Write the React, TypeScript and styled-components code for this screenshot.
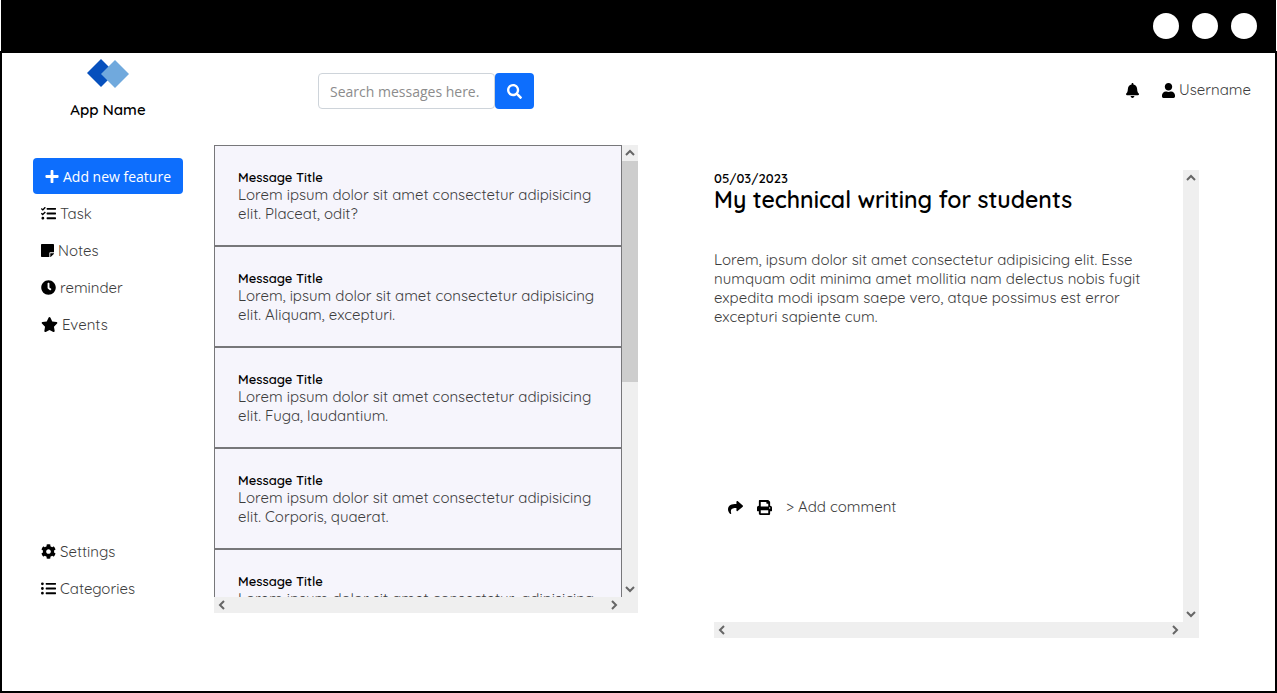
import React from "react";
import styled, { createGlobalStyle } from "styled-components";
import {
  FaBell,
  FaClock,
  FaCog,
  FaListUl,
  FaPlus,
  FaPrint,
  FaSearch,
  FaShare,
  FaStar,
  FaStickyNote,
  FaTasks,
  FaUser,
} from "react-icons/fa";

const brandFont = 'Quicksand, Lato, "Open Sans", sans-serif';
const controlFont = '"Open Sans", "Noto Sans", sans-serif';

const GlobalStyle = createGlobalStyle`
  *, *::before, *::after { box-sizing: border-box; }
  body {
    margin: 0;
    background: #fff;
    color: #000;
    font-family: ${brandFont};
    font-size: 16px;
  }
  h1, h2, p, ul { margin: 0; padding: 0; }
  ul { list-style: none; }
`;

const Shell = styled.div`
  display: flex;
  flex-direction: column;
  min-height: 100vh;
`;

const TitleBar = styled.div`
  display: flex;
  justify-content: flex-end;
  align-items: center;
  gap: 13px;
  height: 51px;
  margin: 0 1px;
  padding-right: 19px;
  background: #000;
`;

const WindowDot = styled.button`
  width: 26px;
  height: 26px;
  padding: 0;
  border: 0;
  border-radius: 50%;
  background: #fff;
`;

const Frame = styled.div`
  flex: 1;
  display: flex;
  flex-direction: column;
  border: 2px solid #000;
`;

const Header = styled.header`
  display: flex;
  height: 92px;
  padding-right: 24px;
`;

const Brand = styled.div`
  display: flex;
  flex-direction: column;
  align-items: center;
  gap: 12px;
  width: 212px;
  padding-top: 6px;
`;

const BrandName = styled.span`
  font-size: 15px;
  line-height: 20px;
  font-weight: 600;
`;

const SearchForm = styled.form`
  display: flex;
  height: 36px;
  margin: 20px auto 0 104px;
`;

const SearchInput = styled.input`
  width: 177px;
  padding: 0 11px;
  border: 1px solid #ced4da;
  border-radius: 4px;
  background: #fff;
  font-family: ${controlFont};
  font-size: 14px;
  &::placeholder { color: #8c8c8c; opacity: 1; }
`;

const SearchButton = styled.button`
  display: flex;
  align-items: center;
  justify-content: center;
  width: 39px;
  padding: 0;
  border: 0;
  border-radius: 4px;
  background: #0d6efd;
  color: #fff;
  font-size: 15px;
`;

const Account = styled.div`
  display: flex;
  align-items: center;
  gap: 23px;
  height: 24px;
  margin-top: 25px;
`;

const IconBox = styled.span<{ $width?: number }>`
  display: flex;
  width: ${(p) => p.$width ?? 15}px;
  svg { width: 100%; height: 15px; }
`;

const BareButton = styled.button`
  display: flex;
  align-items: center;
  gap: 4px;
  padding: 0;
  border: 0;
  background: none;
  color: #000;
  font-family: ${brandFont};
`;

const Label = styled.span`
  color: #3c3c3c;
  font-size: 15px;
  line-height: 20px;
  font-weight: 400;
`;

const Body = styled.div`
  display: flex;
`;

const Sidebar = styled.nav`
  display: flex;
  flex-direction: column;
  width: 212px;
  padding: 13px 31px 31px;
`;

const AddButton = styled.button`
  display: flex;
  align-items: center;
  justify-content: center;
  gap: 4px;
  height: 36px;
  margin-bottom: 1px;
  padding: 0;
  border: 0;
  border-radius: 4px;
  background: #0d6efd;
  color: #fff;
  font-family: ${controlFont};
  font-size: 14px;
  white-space: nowrap;
`;

const NavList = styled.ul<{ $bottom?: boolean }>`
  padding-left: 8px;
  margin-top: ${(p) => (p.$bottom ? "auto" : "0")};
`;

const NavLink = styled.a`
  display: flex;
  align-items: center;
  gap: 4px;
  height: 37px;
  color: #000;
  text-decoration: none;
`;

const Main = styled.main`
  flex: 1;
  display: grid;
  grid-template-columns: minmax(0, 424fr) minmax(0, 485fr);
  gap: 76px;
  padding-right: 76px;
`;

const Pane = styled.section<{ $lowered?: boolean }>`
  display: grid;
  grid-template-columns: minmax(0, 1fr) 16px;
  grid-template-rows: 452px 16px;
  margin-top: ${(p) => (p.$lowered ? "25px" : "0")};
`;

const PaneContent = styled.div`
  overflow: hidden;
`;

const ScrollTrack = styled.div<{ $horizontal?: boolean }>`
  display: flex;
  flex-direction: ${(p) => (p.$horizontal ? "row" : "column")};
  justify-content: space-between;
  background: #efefef;
`;

const TrackCorner = styled.div`
  background: #efefef;
`;

const ScrollThumb = styled.div`
  height: 221px;
  margin-bottom: auto;
  background: #cdcdcd;
`;

const Message = styled.li`
  height: 101px;
  padding: 23px;
  border: 1px solid #77777a;
  background: #f6f5fc;
`;

const MessageTitle = styled.h2`
  font-size: 13px;
  line-height: 16px;
  font-weight: 600;
`;

const Text = styled.p`
  color: #3c3c3c;
  font-size: 15px;
  line-height: 19px;
  font-weight: 400;
  white-space: nowrap;
`;

const Article = styled.article`
  display: flex;
  flex-direction: column;
  height: 100%;
`;

const ArticleDate = styled.time`
  font-size: 13px;
  line-height: 16px;
  font-weight: 600;
`;

const ArticleTitle = styled.h1`
  margin-bottom: 36px;
  font-size: 23px;
  line-height: 28px;
  font-weight: 600;
`;

const Actions = styled.div`
  display: flex;
  align-items: center;
  gap: 14px;
  margin: auto 0 105px 14px;
`;

const arrowPaths = {
  up: "M4 10 8 6 12 10",
  down: "M4 6 8 10 12 6",
  left: "M10 4 6 8 10 12",
  right: "M6 4 10 8 6 12",
};

function Arrow({ dir }: { dir: keyof typeof arrowPaths }) {
  return (
    <svg width="16" height="16" viewBox="0 0 16 16" aria-hidden="true">
      <path d={arrowPaths[dir]} fill="none" stroke="#666" strokeWidth="2" />
    </svg>
  );
}

function Lines({ lines }: { lines: string[] }) {
  return (
    <Text>
      {lines.map((line, i) => (
        <React.Fragment key={line}>
          {i > 0 && <br />}
          {line}
        </React.Fragment>
      ))}
    </Text>
  );
}

function ScrollPane({
  children,
  thumb,
  lowered,
}: {
  children: React.ReactNode;
  thumb?: boolean;
  lowered?: boolean;
}) {
  return (
    <Pane $lowered={lowered}>
      <PaneContent>{children}</PaneContent>
      <ScrollTrack>
        <Arrow dir="up" />
        {thumb && <ScrollThumb />}
        <Arrow dir="down" />
      </ScrollTrack>
      <ScrollTrack $horizontal>
        <Arrow dir="left" />
        <Arrow dir="right" />
      </ScrollTrack>
      <TrackCorner />
    </Pane>
  );
}

const messages = [
  ["Lorem ipsum dolor sit amet consectetur adipisicing", "elit. Placeat, odit?"],
  ["Lorem, ipsum dolor sit amet consectetur adipisicing", "elit. Aliquam, excepturi."],
  ["Lorem ipsum dolor sit amet consectetur adipisicing", "elit. Fuga, laudantium."],
  ["Lorem ipsum dolor sit amet consectetur adipisicing", "elit. Corporis, quaerat."],
  ["Lorem ipsum dolor sit amet consectetur, adipisicing"],
];

const article = [
  "Lorem, ipsum dolor sit amet consectetur adipisicing elit. Esse",
  "numquam odit minima amet mollitia nam delectus nobis fugit",
  "expedita modi ipsam saepe vero, atque possimus est error",
  "excepturi sapiente cum.",
];

const topLinks = [
  { label: "Task", Icon: FaTasks, width: 15 },
  { label: "Notes", Icon: FaStickyNote, width: 13 },
  { label: "reminder", Icon: FaClock, width: 15 },
  { label: "Events", Icon: FaStar, width: 17 },
];

const bottomLinks = [
  { label: "Settings", Icon: FaCog, width: 15 },
  { label: "Categories", Icon: FaListUl, width: 15 },
];

function Links({ items, bottom }: { items: typeof topLinks; bottom?: boolean }) {
  return (
    <NavList $bottom={bottom}>
      {items.map(({ label, Icon, width }) => (
        <li key={label}>
          <NavLink href="#">
            <IconBox $width={width}>
              <Icon />
            </IconBox>
            <Label>{label}</Label>
          </NavLink>
        </li>
      ))}
    </NavList>
  );
}

export default function App() {
  return (
    <>
      <GlobalStyle />
      <Shell>
        <TitleBar>
          <WindowDot aria-label="Minimize" />
          <WindowDot aria-label="Maximize" />
          <WindowDot aria-label="Close" />
        </TitleBar>
        <Frame>
          <Header>
            <Brand>
              <svg width="42" height="29" viewBox="0 0 42 29" aria-hidden="true">
                <path d="M14 0 28 14 14 28 0 14Z" fill="#0650bd" />
                <path d="M28 1 42 15 28 29 14 15Z" fill="#70a9dd" />
              </svg>
              <BrandName>App Name</BrandName>
            </Brand>
            <SearchForm onSubmit={(e) => e.preventDefault()}>
              <SearchInput aria-label="Search messages" placeholder="Search messages here." />
              <SearchButton aria-label="Search">
                <FaSearch />
              </SearchButton>
            </SearchForm>
            <Account>
              <BareButton aria-label="Notifications">
                <IconBox $width={13}>
                  <FaBell />
                </IconBox>
              </BareButton>
              <BareButton>
                <IconBox $width={13}>
                  <FaUser />
                </IconBox>
                <Label>Username</Label>
              </BareButton>
            </Account>
          </Header>
          <Body>
            <Sidebar>
              <AddButton>
                <IconBox $width={14}>
                  <FaPlus />
                </IconBox>
                Add new feature
              </AddButton>
              <Links items={topLinks} />
              <Links items={bottomLinks} bottom />
            </Sidebar>
            <Main>
              <ScrollPane thumb>
                <ul>
                  {messages.map((lines, i) => (
                    <Message key={i}>
                      <MessageTitle>Message Title</MessageTitle>
                      <Lines lines={lines} />
                    </Message>
                  ))}
                </ul>
              </ScrollPane>
              <ScrollPane lowered>
                <Article>
                  <ArticleDate>05/03/2023</ArticleDate>
                  <ArticleTitle>My technical writing for students</ArticleTitle>
                  <Lines lines={article} />
                  <Actions>
                    <BareButton aria-label="Share">
                      <IconBox>
                        <FaShare />
                      </IconBox>
                    </BareButton>
                    <BareButton aria-label="Print">
                      <IconBox>
                        <FaPrint />
                      </IconBox>
                    </BareButton>
                    <BareButton>
                      <Label>&gt; Add comment</Label>
                    </BareButton>
                  </Actions>
                </Article>
              </ScrollPane>
            </Main>
          </Body>
        </Frame>
      </Shell>
    </>
  );
}
